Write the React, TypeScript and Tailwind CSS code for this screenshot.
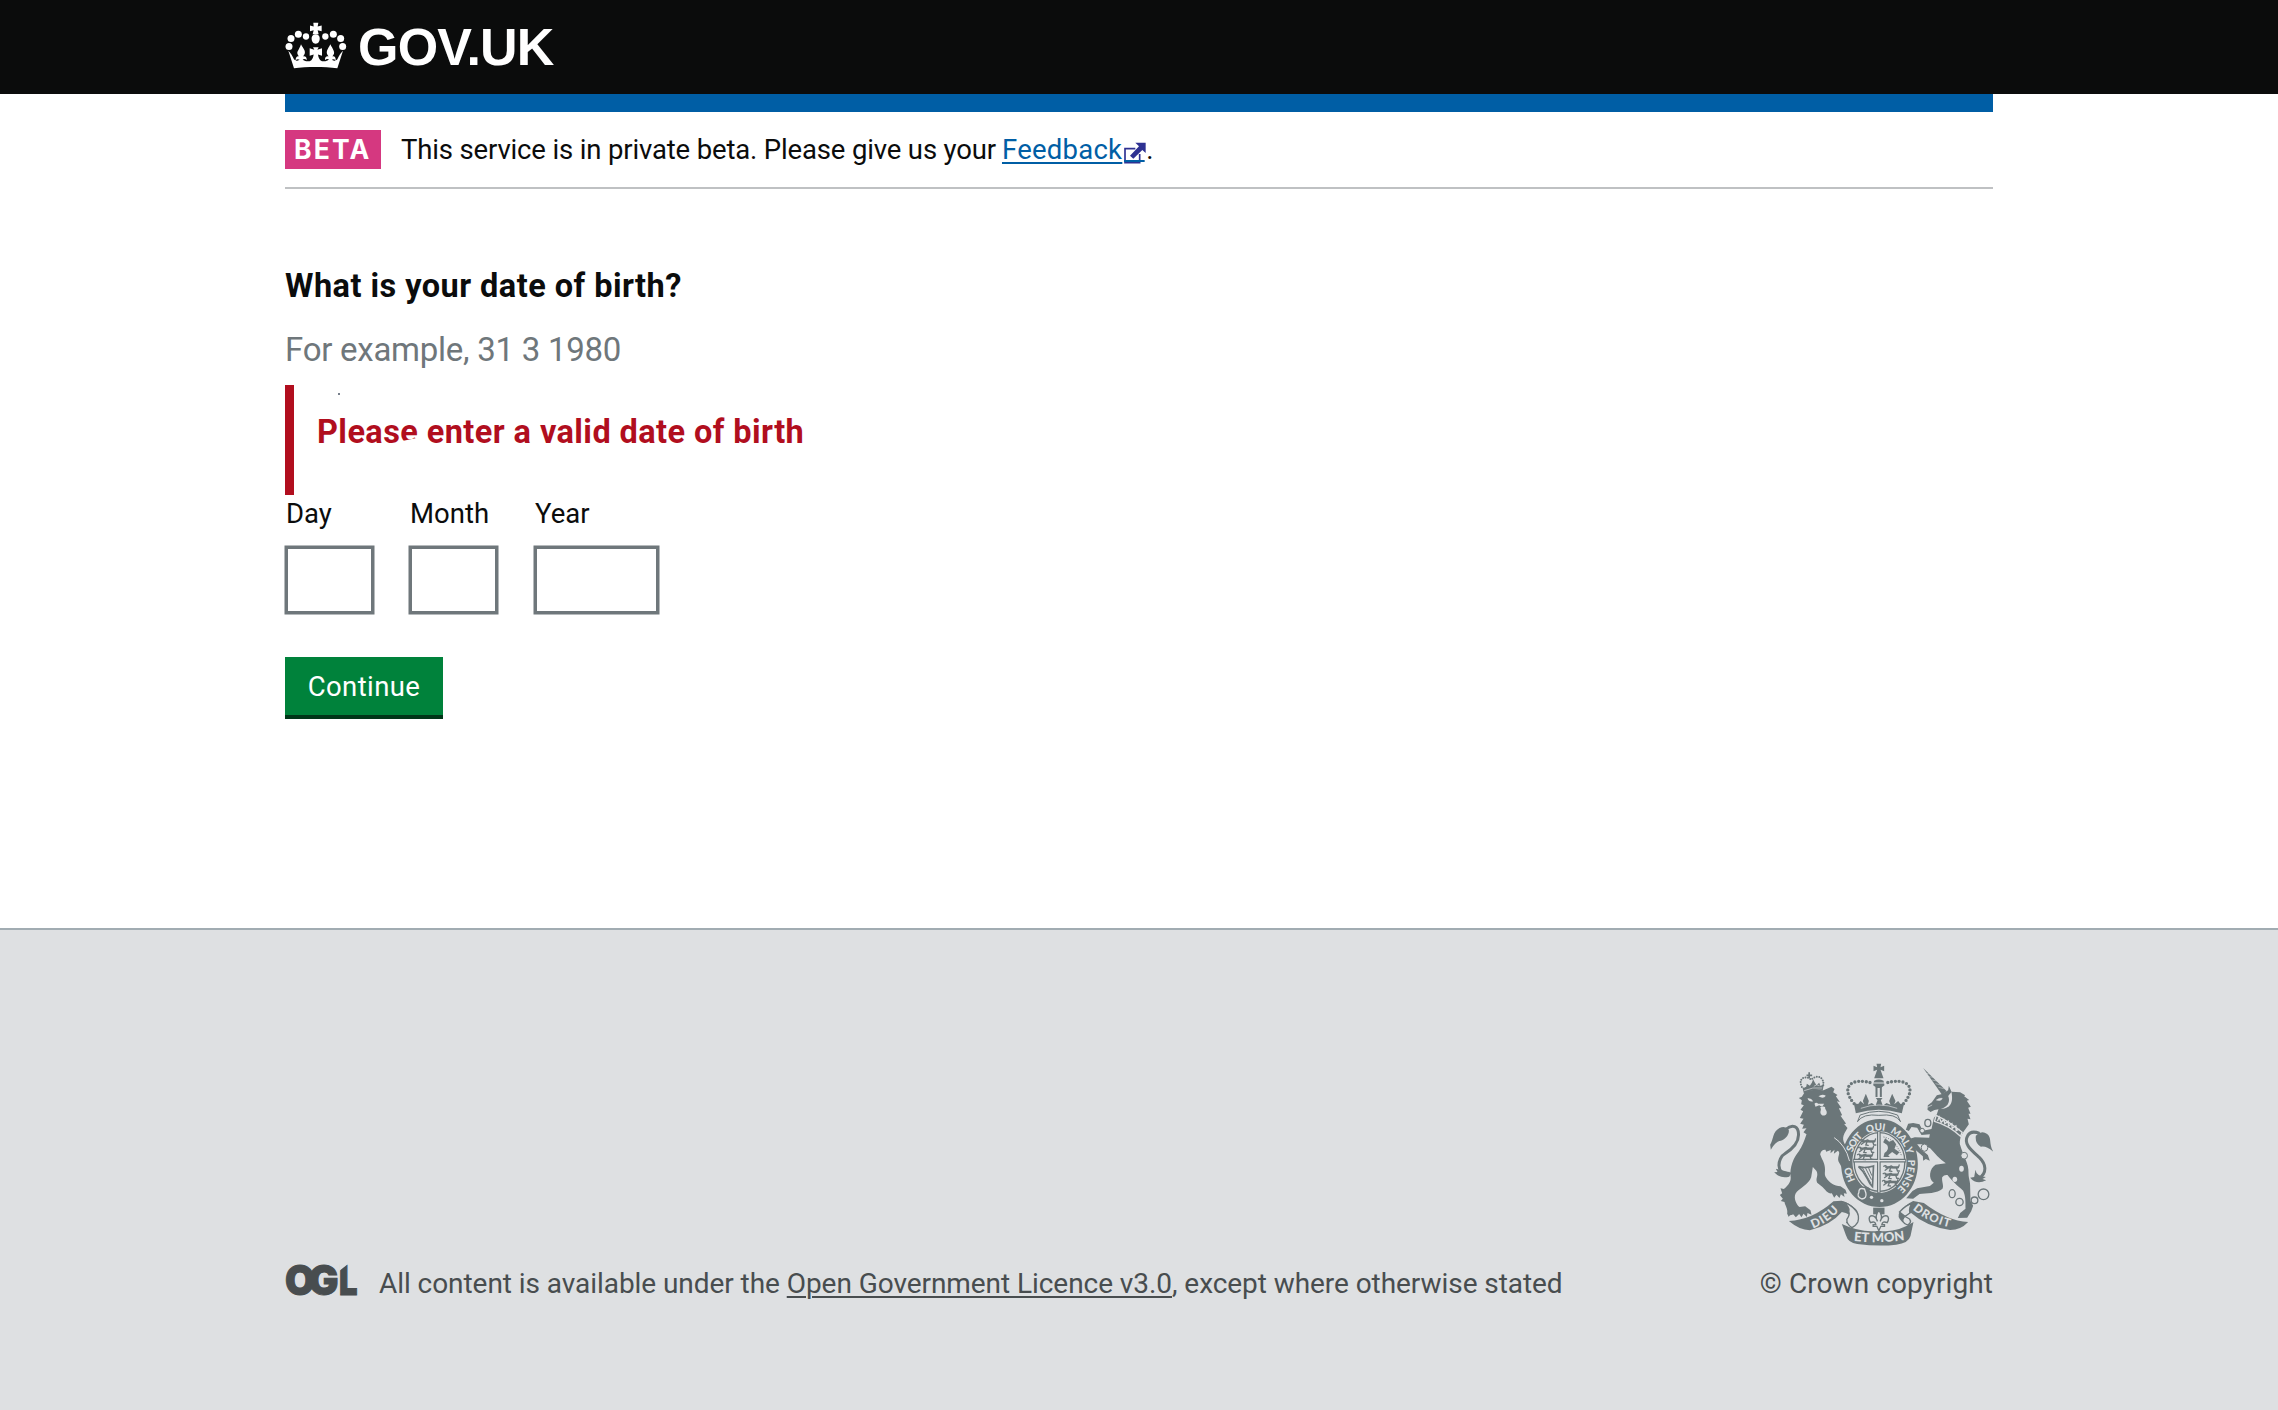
const INK = "#6b7679";
const PAPER = "#dee0e2";

function Crown() {
  return (
    <svg viewBox="45 67 186 140" className="h-[47px] w-[62px]" fill="#fff" aria-hidden="true">
      <path d="M130 69h15l-2 11 12-3v17l-12-3 3 12h-18l3-12-11 3V77l11 3z" />
      <path d="M137 132c-8 0-13-9-12-18 1-7 5-11 12-11s11 4 12 11c1 9-4 18-12 18z" />
      <circle cx="57" cy="140" r="10.5" />
      <circle cx="63" cy="116" r="10.5" />
      <circle cx="85" cy="103" r="10.5" />
      <circle cx="108" cy="110" r="9.5" />
      <circle cx="166" cy="110" r="9.5" />
      <circle cx="190" cy="103" r="10.5" />
      <circle cx="212" cy="116" r="10.5" />
      <circle cx="218" cy="140" r="10.5" />
      <path d="M72 205 55 153c7 7 11 13 17 25 5 5 12 6 17 2-5-3-9-2-12 2-1-8 4-14 10-12-5-5-7-12-3-17 3-8 7-12 9-20 3 8 9 12 11 20 2 6 0 12-5 17 7-2 12 3 11 11-3-4-8-5-12-2 5 6 19 8 26 2 4-4 6-10 7-17l-12 4v-23l14 5-4-8h17l-4 8 14-5v23l-12-4c1 7 3 13 7 17 7 6 20 4 26-2-4-3-9-2-12 2-1-8 4-13 11-11-5-5-7-11-5-17 2-8 7-12 10-20 3 8 8 12 10 20 3 6 1 12-4 17 7-2 11 4 10 12-3-4-7-5-12-2 5 4 12 3 17-2 6-12 10-18 17-25l-17 52c-40-5-91-5-131 0z" />
    </svg>
  );
}

function Quarter({ x, y }: { x: number; y: number }) {
  return (
    <g transform={`translate(${x} ${y})`} fill="none" stroke={INK} strokeWidth="4" strokeLinecap="round">
      <path d="M4 6q5-4 8 1t10 0 9 3l14 0q5-3 5-8M16 12l-8 6M24 12l-3 8 7 1M42 12l3 8 6 0" />
      <path d="M12 9h34" strokeWidth="7" />
    </g>
  );
}

function ExternalIcon() {
  return (
    <svg viewBox="0 0 66 66" className="mt-[12px] ml-[2px] h-[22px] w-[22px] shrink-0" aria-hidden="true">
      <path d="M34 20H3v42h44V36" fill="none" stroke="#2e3192" strokeWidth="5" />
      <path d="M34 2h31v31L55 24 28 50l-10-9 27-28z" fill="#2e3192" />
      <path d="M0 57h62" stroke="#005ea5" strokeWidth="6" />
    </svg>
  );
}

function Lion() {
  return (
    <g>
      <path d="M105 80 109 97Q135 84 166 87l3-18-10 6-4-10-8 8-6-10-4-8-4 10-6 9-9-6-2 9z" />
      <path d="M107 77q5 5 9-2M139 76q8-8 17-2M110 89Q135 77 164 81" fill="none" stroke={PAPER} strokeWidth="2" />
      <path d="M103 78C90 50 115 42 131 56C149 38 172 49 167 75" fill="none" stroke={INK} strokeWidth="6" strokeDasharray="0 7.5" strokeLinecap="round" />
      <path d="M125 34v18M117 43h17" stroke={INK} strokeWidth="5" />
      <path d="M112 93Q135 83 168 88L192 77 201 84 197 94 210 102 205 106 217 123 208 121 222 142 214 142 224 163 219 164 236 188 230 189 240 201 231 217C222 236 229 247 241 262C246 275 247 288 253 297L247 320 240 310 239 324 229 313 225 323 216 307C204 290 223 276 211 269L199 278 201 266 189 277 190 267 176 272 174 266Q160 265 158 280C163 296 170 302 172 318C174 335 169 339 176 350C185 365 200 374 219 376L234 386 238 398 229 397 231 408 220 400 216 411 207 401 200 410 193 397C181 399 173 386 165 378L149 365C143 350 154 346 147 330L136 318 131 349C125 370 92 384 84 398C78 411 86 430 96 438L113 436 129 448 132 461 120 456 118 468 108 458 102 469 95 459 85 469 77 460C69 464 67 461 64 468L59 458C62 445 52 432 51 423L40 420 46 413 37 402 44 397 39 382 49 384C65 370 72 359 69 344C67 321 77 291 94 271C105 255 110 240 117 220L108 214 117 202 104 203 109 191 98 188 108 173 97 171 107 151 99 146 109 133 101 130 103 118 94 111 103 107z" />
      <path d="M120 112q11-2 17 9-13 3-17-9M153 106q11-9 22-2-7 11-22 2M141 128q5-5 11 0h18l-6 9-9-4-11 4z" fill={PAPER} />
      <path d="M158 139q10-5 15 0c-2 7 8 10 4 20-6 8-17 5-18-3-1-7 4-9-1-17z" fill={PAPER} />
      <path d="M200 230Q216 240 228 258 240 275 246 300" fill="none" stroke={PAPER} strokeWidth="3" />
      <path d="M66 337C22 344 31 289 51 279C70 267 93 250 93 222C94 195 74 188 55 205" fill="none" stroke={INK} strokeWidth="9" />
      <path d="M10 266 8 251C19 234 14 213 36 201Q53 192 64 207C66 222 51 236 40 239Q25 240 10 266zM72 335 25 323 30 333 20 334Q38 354 65 347z" />
    </g>
  );
}

function Unicorn() {
  return (
    <g>
      <path d="M131 21 201 90 188 102z" />
      <path d="M140 37l11 2M149 47l13 2M158 57l15 3M168 68l16 4M177 79l16 4" stroke={PAPER} strokeWidth="1.5" />
      <path d="M188 99 206 88 208 74 216 92 242 94 257 103 254 106 269 117 262 119 274 137 266 140 273 158 267 158 273 175 264 173 268 190 258 204C247 219 240 230 241 249C250 283 269 307 267 337C267 353 273 362 272 380L273 420 281 434 275 451 263 470 235 471 242 456 258 443C258 425 259 406 251 389C232 372 218 361 204 342Q194 340 188 349C186 363 194 374 189 383C174 398 139 396 120 399L101 413 80 412 99 390 113 382 151 375 163 365C145 353 150 322 168 311L199 307C179 294 166 276 152 262L127 250 113 250 124 264 145 282 151 299 139 294 131 299 130 286 104 263 96 247 91 233 106 229 149 230 151 220 126 222 113 200 96 198 88 210 79 206 86 188 101 186 120 190 130 209 156 204 163 171 172 160 177 145 165 147 153 153 144 146 145 133 157 124 172 103z" />
      <path d="M171 117q9-7 17-5-2 9-17 5M144 139l14-7" fill={PAPER} stroke={PAPER} strokeWidth="2" />
      <path d="M216 93C221 121 217 142 184 144C211 136 211 116 206 105" fill={PAPER} />
      <path d="M170 163Q207 180 248 214L243 226Q208 193 165 181z" fill={INK} stroke={PAPER} strokeWidth="4" />
      <path d="M174 180 179 168 185 184 193 176 196 188 206 181 207 195 217 188 218 202 229 195 230 209 240 204" fill="none" stroke={PAPER} strokeWidth="4" />
      <path d="M297 353C325 336 319 309 300 290C276 268 251 249 264 225Q273 207 300 217" fill="none" stroke={INK} strokeWidth="9" />
      <path d="M289 224Q306 207 323 219C338 231 327 249 342 273Q320 253 304 257 286 247 289 224zM288 326Q290 345 319 348L309 354 320 358Q291 373 272 350L284 348z" />
      <g fill="none" stroke={INK} strokeWidth="4">
        <circle cx="312" cy="400" r="16" />
        <circle cx="285" cy="418" r="10" />
        <circle cx="240" cy="423" r="11" />
        <ellipse cx="218" cy="398" rx="9" ry="12" />
        <ellipse cx="145" cy="186" rx="9" ry="11" />
      </g>
      <g fill={PAPER} stroke={INK} strokeWidth="3">
        <circle cx="254" cy="284" r="10" />
        <ellipse cx="135" cy="260" rx="10" ry="11" />
        <circle cx="128" cy="209" r="7" />
      </g>
      <g fill={PAPER}>
        <ellipse cx="246" cy="323" rx="7" ry="9" />
        <ellipse cx="226" cy="355" rx="7" ry="8" />
      </g>
    </g>
  );
}

function Crest() {
  const lettering = "font-['Lato'] font-black";
  return (
    <svg viewBox="62 66 668 549" className="h-[183px] w-[223px]" fill={INK} aria-hidden="true">
      <defs>
        <path id="garter" d="M318 418A85 98 0 0 1 305 366A85 98 0 0 1 390 268A85 98 0 0 1 475 366A85 98 0 0 1 436 449" />
        <path id="dieu" d="M190 562Q238 545 272 504" />
        <path id="etmon" d="M313 600Q388 608 466 597" />
        <path id="droit" d="M489 505Q540 547 604 560" />
      </defs>
      <path fillRule="evenodd" d="M390 234C455 234 505 296 505 368S455 498 390 498 275 440 275 368 325 234 390 234zM390 271C346 271 309 312 309 363S346 456 390 456 471 414 471 363 434 271 390 271z" />
      <ellipse cx="390" cy="363" rx="76" ry="88" fill="none" stroke={INK} strokeWidth="4" />
      <path d="M388 271V455M311 359H469" stroke={INK} strokeWidth="11" />
      <path d="M388 273V453M313 359H467" stroke={PAPER} strokeWidth="4" />
      <Quarter x={328} y={292} />
      <Quarter x={322} y={314} />
      <Quarter x={320} y={335} />
      <Quarter x={399} y={370} />
      <Quarter x={397} y={392} />
      <Quarter x={395} y={414} />
      <path d="M405 336q16-10 8-24l-12-8 6-12 12 10 12-5 9 13-5 13 15 11-8 9-14-10-12 10 5 5h-19z" />
      <path d="M402 288q35 5 54 56" fill="none" stroke={INK} strokeWidth="3" strokeDasharray="3 4" />
      <path d="M327 377q20 6 45-2l-3 62q-9-9-16-25-10-21-26-35z" fill="none" stroke={INK} strokeWidth="5" />
      <path d="M339 381l25 46M348 381l18 35M357 380l10 24" stroke={INK} strokeWidth="3" />
      <path d="M330 440q-12 13-5 31 12 13 24 4l14-32q-15-11-33-3z" />
      <path d="M345 444q-18-6-17 11-8 12 9 19 16-2 12-18z" fill="none" stroke={PAPER} strokeWidth="4" />
      <circle cx="366" cy="469" r="5" fill={PAPER} />
      <circle cx="397" cy="479" r="5" fill={PAPER} />

      <path d="M324 242L332 222Q388 200 444 222L453 242Q440 217 388 223 340 217 324 242z" fill={PAPER} stroke={INK} strokeWidth="3" />
      <path d="M319 217 313 187 326 189 333 180 344 190 340 180 349 158 358 180 355 191 367 186 378 194 384 178 379 171 399 171 394 178 400 194 411 186 423 191 419 180 428 158 438 180 434 190 446 180 453 189 464 187 457 217Q388 195 319 217z" />
      <path d="M334 202Q389 182 443 202" fill="none" stroke={PAPER} strokeWidth="2" />
      <path d="M314 188C270 137 307 107 370 127M462 188C506 137 470 107 406 127" fill="none" stroke={INK} strokeWidth="10" strokeDasharray="0 11.5" strokeLinecap="round" />
      <path d="M374 119Q388 112 402 119L405 133 394 141 382 141 371 133zM381 68h14l-2 11 11-5v17l-11-5 9 26h-28l9-26-11 5V74l11 5z" />
      <path d="M372 126h32" stroke={PAPER} strokeWidth="3" />
      <path d="M381 138v30M394 138v30" stroke={INK} strokeWidth="6" />

      <g transform="translate(54 60)" fill={INK}><Lion /></g>
      <g transform="translate(390 60)" fill={INK}><Unicorn /></g>
      <g fill={PAPER} className={lettering} fontSize="30">
        <text><textPath href="#garter" startOffset="1" textLength="42">HO</textPath></text>
        <text><textPath href="#garter" startOffset="86" textLength="58">SOIT</textPath></text>
        <text><textPath href="#garter" startOffset="160" textLength="54">QUI</textPath></text>
        <text><textPath href="#garter" startOffset="230" textLength="86">MAL Y</textPath></text>
        <text><textPath href="#garter" startOffset="332" textLength="96">PENSE</textPath></text>
      </g>

      <path d="M118 540Q189 537 252 481L276 479Q296 483 319 504 333 518 322 539L308 552 289 546 301 528Q304 519 277 513 244 552 181 568 150 567 118 540zM656 543Q594 540 523 486L491 480Q466 492 450 514 441 527 458 543L474 549 479 537 463 525Q470 518 485 516 529 556 602 567 634 567 656 543z" />
      <path d="M276 483Q302 494 298 512 302 521 292 535 291 549 307 560 318 556 325 543 331 522 318 508 300 486 276 483zM490 486Q477 498 481 516 470 524 463 529 453 544 474 552 488 545 480 534 466 527 450 513 470 491 490 486z" fill={PAPER} stroke={INK} strokeWidth="4" />
      <path d="M277 549Q338 577 388 569 440 577 492 543L483 585Q477 607 440 611 388 617 323 609 296 606 289 582z" />
      <g fill={PAPER} className={lettering}>
        <text fontSize="36"><textPath href="#dieu" textLength="96">DIEU</textPath></text>
        <text fontSize="39"><textPath href="#etmon" textLength="153">ET MON</textPath></text>
        <text fontSize="35"><textPath href="#droit" textLength="124">DROIT</textPath></text>
      </g>
      <path d="M371 500h34v20h-34z" />
      <path d="M388 508Q374 526 384 541 377 521 363 525 355 531 363 545 377 539 379 551H371v5h11l6 13 6-13h11v-5h-8Q399 539 413 545 421 531 413 525 399 521 392 541 402 526 388 508z" fill={PAPER} stroke={INK} strokeWidth="4" />
    </svg>
  );
}

function OglLogo() {
  return (
    <svg viewBox="0 -12 75 55" className="-mt-[11px] -mb-3 block h-[55px] w-[75px] shrink-0 font-['Inter'] font-black" fill="#484d4f">
      <text x="0" y="30" fontSize="40.5" textLength="30" lengthAdjust="spacingAndGlyphs" stroke="#484d4f" strokeWidth="1">O</text>
      <text x="23.5" y="30" fontSize="40.5" textLength="30" lengthAdjust="spacingAndGlyphs" stroke="#484d4f" strokeWidth="1">G</text>
      <text x="54" y="30" fontSize="40.5" textLength="18.5" lengthAdjust="spacingAndGlyphs" stroke="#484d4f" strokeWidth="1">L</text>
      <path d="M54.2 -1H63L54.2 6z" fill={PAPER} />
    </svg>
  );
}

function DateField({ label, width }: { label: string; width: string }) {
  return (
    <label className="flex flex-col">
      <span className="h-[38px] w-0 pl-px text-[27.5px] leading-[38px] whitespace-nowrap">{label}</span>
      <input className={`mt-[13px] h-[68px] rounded-none border-[3px] border-[#6f777b] bg-white ring-[0.5px] ring-[#6f777b] outline-none ${width}`} />
    </label>
  );
}

export default function App() {
  return (
    <div className="flex min-h-screen flex-col bg-white font-['Roboto',sans-serif] text-[#0b0c0c]">
      <header className="h-[94px] bg-[#0b0c0c]">
        <div className="mx-auto flex h-full w-[1708px] pt-[22px]">
          <Crown />
          <span className="mt-[-1px] ml-[11px] font-['Liberation_Sans'] text-[52px] leading-[52px] font-bold tracking-[-0.8px] text-white">
            GOV.UK
          </span>
        </div>
      </header>

      <main className="mx-auto w-[1708px]">
        <div className="h-[18px] bg-[#005ea5]" />
        <div className="flex h-[77px] items-start border-b-2 border-[#bfc1c3] pt-[18px] text-[27.5px] leading-[39px]">
          <strong className="h-[39px] w-24 bg-[#d53880] pl-[9px] font-['Inter'] text-[26.5px] tracking-[2.2px] text-white">BETA</strong>
          <span className="ml-5 tracking-[-0.15px]">This service is in private beta. Please give us your</span>
          <a className="ml-[6px] tracking-[0.25px] text-[#005ea5] underline decoration-2 underline-offset-[3px]">Feedback</a>
          <ExternalIcon />
          <span>.</span>
        </div>

        <h1 className="mt-[77px] text-[32.5px] leading-10 font-bold tracking-[0.46px]">What is your date of birth?</h1>
        <p className="mt-6 text-[33px] leading-10 tracking-[-0.26px] text-[#6f777b]">For example, 31 3 1980</p>
        <div className="relative mt-[15px] h-[110px] border-l-[9px] border-[#b10e1e] pt-[27px] pl-[23px]">
          <p className="text-[32.5px] leading-10 font-bold tracking-[0.42px] text-[#b10e1e]">Please enter a valid date of birth</p>
          <i className="absolute top-2 left-11 size-[2px] rounded-full bg-gray-600" />
          <i className="absolute top-[54px] left-[110px] h-[7px] w-[16px] -rotate-12 bg-white" />
        </div>

        <div className="flex">
          <DateField label="Day" width="w-[89px]" />
          <div className="ml-[35px]"><DateField label="Month" width="w-[89px]" /></div>
          <div className="ml-9"><DateField label="Year" width="w-[125px]" /></div>
        </div>

        <button className="mt-[43px] block h-[62px] w-[158px] border-b-[4px] border-[#003618] bg-[#00823b] pt-px text-[27.5px] tracking-[0.4px] text-white">
          Continue
        </button>
      </main>

      <footer className="mt-[209px] h-[482px] border-t-2 border-[#a1acb2] bg-[#dee0e2] text-[28px] leading-10 text-[#484d4f]">
        <div className="mx-auto flex h-full w-[1708px] items-end justify-between pb-[106px]">
          <div className="flex items-start">
            <OglLogo />
            <p className="ml-[19px] tracking-[-0.06px]">
              All content is available under the <a className="underline decoration-2 underline-offset-[3px]">Open Government Licence v3.0</a>, except where otherwise stated
            </p>
          </div>
          <div className="flex flex-col items-end">
            <Crest />
            <span className="mt-[18px] tracking-[0.08px]">© Crown copyright</span>
          </div>
        </div>
      </footer>
    </div>
  );
}
